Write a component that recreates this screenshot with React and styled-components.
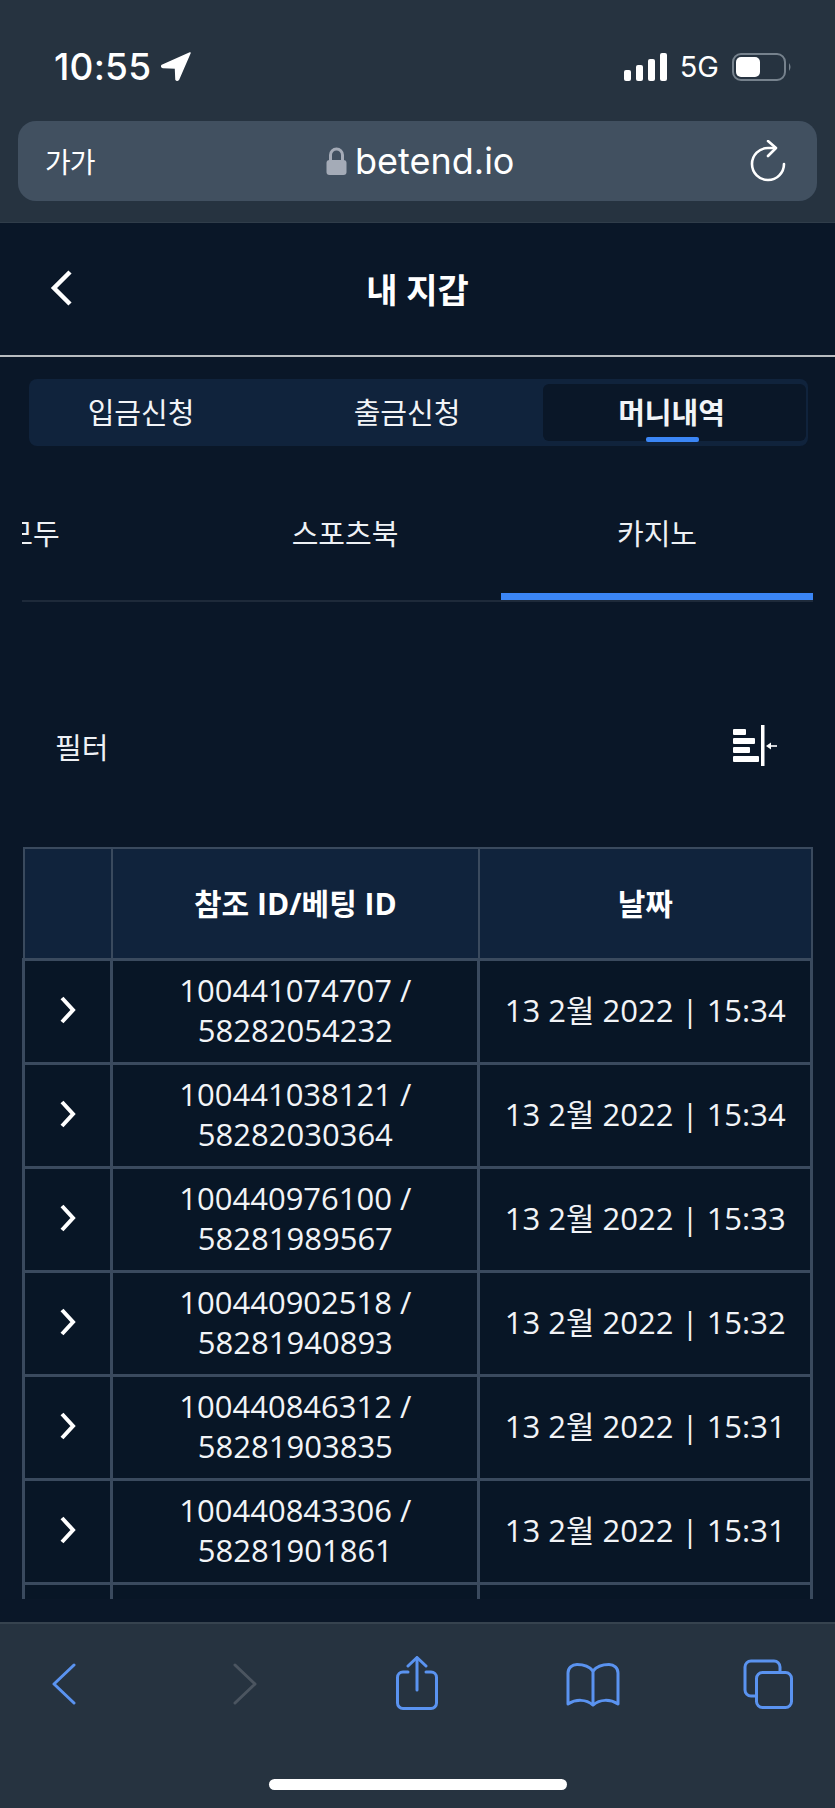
import React from "react";
import styled, { createGlobalStyle } from "styled-components";

const GlobalStyle = createGlobalStyle`
  * { box-sizing: border-box; }
  html, body { margin: 0; padding: 0; background: #0a1728; }
  body { font-family: "Open Sans", "Noto Sans CJK KR", sans-serif; color: #fff; }
`;

const Page = styled.div`
  width: 835px;
  height: 1808px;
  display: flex;
  flex-direction: column;
  overflow: hidden;
  background: #0a1728;
`;

/* safari chrome, top */
const Chrome = styled.div`
  height: 223px;
  flex: none;
  background: #263340;
  border-bottom: 1px solid #303d4a;
  padding: 0 18px;
`;
const StatusBar = styled.div`
  height: 121px;
  padding: 52px 0 0 36px;
  display: flex;
  align-items: flex-start;
`;
const Time = styled.div`
  font-family: Inter, sans-serif;
  font-size: 37px;
  font-weight: 500;
  line-height: 29px;
  letter-spacing: 0.2px;
  margin-right: 10px;
`;
const StatusRight = styled.div`
  margin-left: auto;
  display: flex;
  align-items: center;
  height: 29px;
  margin-right: 24px;
`;
const NetworkLabel = styled.span`
  font-family: Inter, sans-serif;
  font-size: 29px;
  line-height: 29px;
  margin: 0 13px 0 12px;
`;
const UrlBar = styled.div`
  height: 80px;
  background: #415060;
  border-radius: 18px;
  display: flex;
  align-items: center;
  padding: 0 31px 0 27px;
`;
const TextSize = styled.span`
  font-size: 28px;
  width: 281px;
  letter-spacing: -1px;
`;
const Address = styled.div`
  display: flex;
  align-items: center;
  gap: 8px;
  font-family: Inter, sans-serif;
  font-size: 36px;
  line-height: 40px;
`;
const ReloadWrap = styled.div`
  margin-left: auto;
  display: flex;
`;

/* page header */
const Header = styled.header`
  height: 134px;
  flex: none;
  position: relative;
  display: flex;
  align-items: center;
  justify-content: center;
  padding-bottom: 2px;
  border-bottom: 2px solid #b8bcc0;
`;
const BackButton = styled.div`
  position: absolute;
  left: 49px;
  top: 46px;
  display: flex;
`;
const Title = styled.h1`
  margin: 0;
  font-size: 34px;
  font-weight: 700;
`;

const TabBar = styled.div`
  margin: 22px 27px 0 29px;
  height: 67px;
  flex: none;
  background: #10233c;
  border-radius: 8px;
  display: grid;
  grid-template-columns: 224px 290px 1fr;
  padding: 5px 2px 5px 0;
`;
const Tab = styled.div`
  position: relative;
  display: flex;
  align-items: center;
  justify-content: center;
  font-size: 29px;
  font-weight: ${(p) => (p.$active ? 700 : 400)};
  background: ${(p) => (p.$active ? "#0a1728" : "transparent")};
  border-radius: 6px;
  padding: 0 ${(p) => p.$pr || 0}px 4px ${(p) => p.$pl || 0}px;
  color: #f2f4f7;
  &::after {
    content: "";
    display: ${(p) => (p.$active ? "block" : "none")};
    position: absolute;
    left: 103px;
    bottom: -1px;
    width: 53px;
    height: 5px;
    border-radius: 2px;
    background: #3b86f6;
  }
`;

const SubTabs = styled.div`
  margin: 24px 22px 0;
  height: 132px;
  flex: none;
  overflow: hidden;
  border-bottom: 2px solid #1e2a3a;
`;
const SubTabTrack = styled.div`
  display: flex;
  width: 936px;
  height: 130px;
  margin-left: -145px;
`;
const SubTab = styled.div`
  width: 312px;
  padding-top: 42px;
  text-align: center;
  font-size: 29px;
  line-height: 44px;
  color: #eef1f5;
  border-bottom: 7px solid ${(p) => (p.$active ? "#3b86f6" : "transparent")};
`;

const FilterRow = styled.div`
  flex: none;
  margin-top: 123px;
  height: 41px;
  padding: 0 58px 0 55px;
  display: flex;
  align-items: center;
  justify-content: space-between;
  font-size: 29px;
  color: #eef1f5;
`;

/* the table is cut by the toolbar */
const TableWrap = styled.div`
  margin: 81px 22px 0;
  height: 752px;
  flex: none;
  overflow: hidden;
`;
const Table = styled.table`
  width: 791px;
  table-layout: fixed;
  border-collapse: collapse;
`;
const HeadCell = styled.th`
  height: 111px;
  background: #10233c;
  border: 2px solid #3a4a5e;
  font-size: 30px;
  font-weight: 700;
  text-align: center;
  padding: 0 0 2px;
  width: ${(p) => p.$width || "auto"};
`;
const Cell = styled.td`
  height: 104px;
  border: 3px solid #3a4a5e;
  background: #081626;
  text-align: center;
  font-size: 31px;
  line-height: 40px;
  padding: 0 8px 2px;
  color: #f2f4f7;
`;
const DateText = styled.span`
  white-space: nowrap;
`;
const ExpandIcon = styled.svg`
  display: block;
  margin: 0 auto;
`;

const Spacer = styled.div`
  flex: 1;
`;

/* safari chrome, bottom */
const Toolbar = styled.div`
  height: 186px;
  flex: none;
  background: #263340;
  border-top: 2px solid #36434f;
  position: relative;
`;
const ToolRow = styled.div`
  display: flex;
  align-items: flex-start;
  padding: 32px 0 0 52px;
`;
const ToolIcon = styled.svg`
  display: block;
  flex: none;
  margin-left: ${(p) => p.$ml || 0}px;
  margin-top: ${(p) => p.$mt || 0}px;
`;
const HomeBar = styled.div`
  position: absolute;
  left: 269px;
  bottom: 18px;
  width: 298px;
  height: 11px;
  border-radius: 6px;
  background: #fff;
`;

const rows = [
  ["100441074707", "58282054232", "15:34"],
  ["100441038121", "58282030364", "15:34"],
  ["100440976100", "58281989567", "15:33"],
  ["100440902518", "58281940893", "15:32"],
  ["100440846312", "58281903835", "15:31"],
  ["100440843306", "58281901861", "15:31"],
];

const BLUE = "#5a93f0";

const App = () => {
  return (
    <Page>
      <GlobalStyle />
      <Chrome>
        <StatusBar>
          <Time>10:55</Time>
          <svg width="30" height="29" viewBox="0 0 30 29">
            <path d="M29 1 L1 13.5 Q0 15 2 15.5 L14.5 16 L15 27.5 Q16 29 17.5 27.5 Z" fill="#fff" stroke="#fff" strokeWidth="1.5" strokeLinejoin="round" />
          </svg>
          <StatusRight>
            <svg width="44" height="28" viewBox="0 0 44 28">
              <rect x="0" y="17" width="7" height="11" rx="2" fill="#fff" />
              <rect x="12" y="12" width="7" height="16" rx="2" fill="#fff" />
              <rect x="24" y="6" width="7" height="22" rx="2" fill="#fff" />
              <rect x="36" y="0" width="7" height="28" rx="2" fill="#fff" />
            </svg>
            <NetworkLabel>5G</NetworkLabel>
            <svg width="61" height="28" viewBox="0 0 61 28">
              <rect x="1" y="1" width="52" height="26" rx="8" fill="none" stroke="#76828d" strokeWidth="2" />
              <rect x="4" y="4" width="24" height="20" rx="5" fill="#fff" />
              <path d="M57 10 Q60 14 57 18 Z" fill="#76828d" />
            </svg>
          </StatusRight>
        </StatusBar>
        <UrlBar>
          <TextSize>가가</TextSize>
          <Address>
            <svg width="21" height="28" viewBox="0 0 21 28">
              <path d="M4.5 14 V8 a6 6 0 0 1 12 0 V14" fill="none" stroke="#a4abb7" strokeWidth="3" />
              <rect x="0.5" y="13" width="20" height="15" rx="3" fill="#a4abb7" />
            </svg>
            betend.io
          </Address>
          <ReloadWrap>
            <svg width="36" height="42" viewBox="0 0 36 42">
              <path d="M34 24 A16 16 0 1 1 18 8 H25" fill="none" stroke="#fff" strokeWidth="2.6" strokeLinecap="round" />
              <path d="M18 1 L26 8 L18 16" fill="none" stroke="#fff" strokeWidth="2.6" strokeLinecap="round" strokeLinejoin="round" />
            </svg>
          </ReloadWrap>
        </UrlBar>
      </Chrome>

      <Header>
        <BackButton>
          <svg width="24" height="38" viewBox="0 0 24 38">
            <path d="M21 3 L5 19 L21 35" fill="none" stroke="#fff" strokeWidth="4.5" strokeLinejoin="miter" />
          </svg>
        </BackButton>
        <Title>내 지갑</Title>
      </Header>

      <TabBar>
        <Tab>입금신청</Tab>
        <Tab $pl="18">출금신청</Tab>
        <Tab $active $pr="6">머니내역</Tab>
      </TabBar>

      <SubTabs>
        <SubTabTrack>
          <SubTab>모두</SubTab>
          <SubTab>스포츠북</SubTab>
          <SubTab $active>카지노</SubTab>
        </SubTabTrack>
      </SubTabs>

      <FilterRow>
        <span>필터</span>
        <svg width="44" height="41" viewBox="0 0 44 41">
          <rect x="0" y="4" width="13" height="6" rx="1" fill="#fff" />
          <rect x="0" y="13" width="22" height="6" rx="1" fill="#fff" />
          <rect x="0" y="22" width="17" height="6" rx="1" fill="#fff" />
          <rect x="0" y="31" width="26" height="6" rx="1" fill="#fff" />
          <rect x="28" y="0" width="3.5" height="41" fill="#fff" />
          <path d="M44 21 H37" stroke="#fff" strokeWidth="1.6" />
          <path d="M33 21 L38 17.5 V24.5 Z" fill="#fff" />
        </svg>
      </FilterRow>

      <TableWrap>
        <Table>
          <thead>
            <tr>
              <HeadCell $width="11.2%" />
              <HeadCell $width="46.6%">참조 ID/베팅 ID</HeadCell>
              <HeadCell>날짜</HeadCell>
            </tr>
          </thead>
          <tbody>
            {rows.map(([ref, bet, time]) => (
              <tr key={ref}>
                <Cell>
                  <ExpandIcon width="18" height="28" viewBox="0 0 18 28">
                    <path d="M3 2 L14 14 L3 26" fill="none" stroke="#fff" strokeWidth="4" />
                  </ExpandIcon>
                </Cell>
                <Cell>
                  {ref} / {bet}
                </Cell>
                <Cell>
                  <DateText>13 2월 2022 | {time}</DateText>
                </Cell>
              </tr>
            ))}
            <tr>
              <Cell />
              <Cell />
              <Cell />
            </tr>
          </tbody>
        </Table>
      </TableWrap>

      <Spacer />

      <Toolbar>
        <ToolRow>
          <ToolIcon width="24" height="42" viewBox="0 0 24 42" $mt="7">
            <path d="M22 2 L2 21 L22 40" fill="none" stroke={BLUE} strokeWidth="3" strokeLinecap="round" strokeLinejoin="round" />
          </ToolIcon>
          <ToolIcon width="24" height="42" viewBox="0 0 24 42" $ml="157" $mt="7">
            <path d="M2 2 L22 21 L2 40" fill="none" stroke="#4b5560" strokeWidth="3" strokeLinecap="round" strokeLinejoin="round" />
          </ToolIcon>
          <ToolIcon width="42" height="54" viewBox="0 0 42 54" $ml="139">
            <path d="M12 16 H7 a5.5 5.5 0 0 0 -5.5 5.5 V47 a5.5 5.5 0 0 0 5.5 5.5 H35 a5.5 5.5 0 0 0 5.5 -5.5 V21.5 a5.5 5.5 0 0 0 -5.5 -5.5 H30" fill="none" stroke={BLUE} strokeWidth="3" strokeLinecap="round" />
            <path d="M21 2 V34" fill="none" stroke={BLUE} strokeWidth="3" strokeLinecap="round" />
            <path d="M12 10 L21 1.5 L30 10" fill="none" stroke={BLUE} strokeWidth="3" strokeLinecap="round" strokeLinejoin="round" />
          </ToolIcon>
          <ToolIcon width="54" height="44" viewBox="0 0 54 44" $ml="128" $mt="7">
            <path d="M27 8 C23 3 17 1.5 11 1.5 C6 1.5 2 5 2 10 V41 C10 36 20 36 27 42 C34 36 44 36 52 41 V10 C52 5 48 1.5 43 1.5 C37 1.5 31 3 27 8 Z" fill="none" stroke={BLUE} strokeWidth="3" strokeLinejoin="round" strokeLinecap="round" />
            <path d="M27 8 V42" fill="none" stroke={BLUE} strokeWidth="3" />
          </ToolIcon>
          <ToolIcon width="50" height="50" viewBox="0 0 50 50" $ml="123" $mt="3">
            <path d="M37 12 V8 a6 6 0 0 0 -6 -6 H8 a6 6 0 0 0 -6 6 V31 a6 6 0 0 0 6 6 H13" fill="none" stroke={BLUE} strokeWidth="3" />
            <rect x="13.5" y="13.5" width="35" height="35" rx="6" fill="none" stroke={BLUE} strokeWidth="3" />
          </ToolIcon>
        </ToolRow>
        <HomeBar />
      </Toolbar>
    </Page>
  );
};

export default App;
